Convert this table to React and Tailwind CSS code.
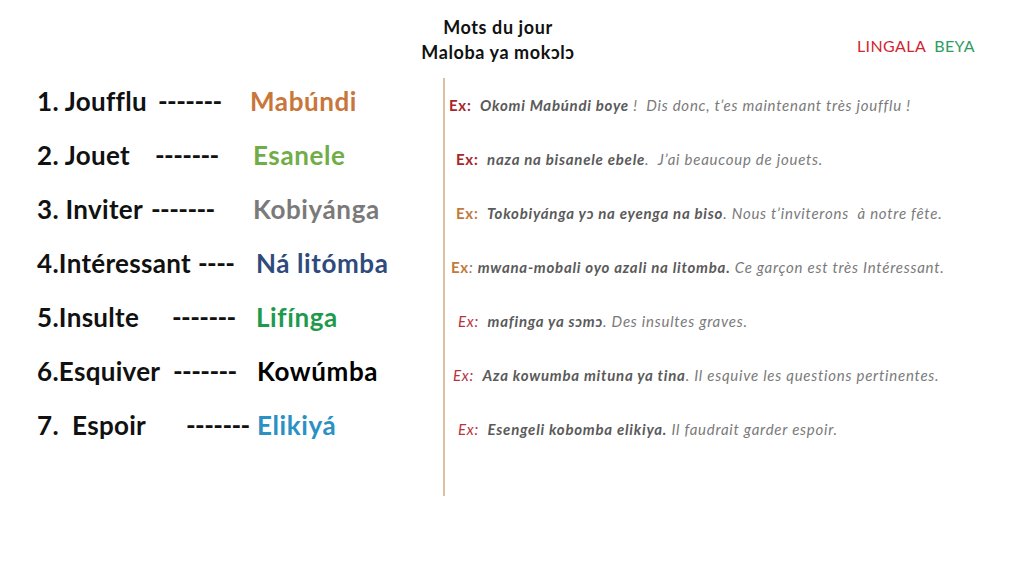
const words = [
  { fr: '1. Joufflu', w: 'w-[121px]', dash: '-------', dw: 'w-[92px]', ln: 'Mabúndi', color: 'text-[#c8763a]' },
  { fr: '2. Jouet', w: 'w-[118px]', dash: '-------', dw: 'w-[98px]', ln: 'Esanele', color: 'text-[#70ad47]' },
  { fr: '3. Inviter', w: 'w-[114px]', dash: '-------', dw: 'w-[102px]', ln: 'Kobiyánga', color: 'text-[#7a7a7a]' },
  { fr: '4.Intéressant', w: 'w-[161px]', dash: '----', dw: 'w-[58px]', ln: 'Ná litómba', color: 'text-[#2f4b7c]' },
  { fr: '5.Insulte', w: 'w-[135px]', dash: '-------', dw: 'w-[84px]', ln: 'Lifínga', color: 'text-[#1e9a4c]' },
  { fr: '6.Esquiver', w: 'w-[136px]', dash: '-------', dw: 'w-[84px]', ln: 'Kowúmba', color: 'text-black' },
  { fr: '7.  Espoir', w: 'w-[149px]', dash: '-------', dw: 'w-[71px]', ln: 'Elikiyá', color: 'text-[#2b90c2]' },
]

const examples = [
  { pad: 'pl-[4px]', ex: 'Ex:', exCls: 'not-italic font-bold text-[#a6262b]', ln: 'Okomi Mabúndi boye', sep: ' !  ', fr: 'Dis donc, t’es maintenant très joufflu !' },
  { pad: 'pl-[11px]', ex: 'Ex:', exCls: 'not-italic font-bold text-[#a6262b]', ln: 'naza na bisanele ebele', sep: '.  ', fr: 'J’ai beaucoup de jouets.' },
  { pad: 'pl-[11px]', ex: 'Ex:', exCls: 'not-italic font-bold text-[#c07a3c]', ln: 'Tokobiyánga yɔ na eyenga na biso', sep: '. ', fr: 'Nous t’inviterons  à notre fête.' },
  { pad: 'pl-[6px]', ex: 'Ex', exCls: 'not-italic font-bold text-[#c07a3c]', ln: 'mwana-mobali oyo azali na litomba.', sep: ': ', fr: 'Ce garçon est très Intéressant.', colonFirst: true },
  { pad: 'pl-[13px]', ex: 'Ex:', exCls: 'text-[#b8343c]', ln: 'mafinga ya sɔmɔ', sep: '. ', fr: 'Des insultes graves.' },
  { pad: 'pl-[8px]', ex: 'Ex:', exCls: 'text-[#b8343c]', ln: 'Aza kowumba mituna ya tina', sep: '. ', fr: 'Il esquive les questions pertinentes.' },
  { pad: 'pl-[13px]', ex: 'Ex:', exCls: 'text-[#b8343c]', ln: 'Esengeli kobomba elikiya.', sep: ' ', fr: 'Il faudrait garder espoir.' },
]

export default function App() {
  return (
    <div className="w-[1024px] h-[576px] bg-white overflow-hidden font-['Lato',sans-serif]">
      {/* header */}
      <div className="flex pt-[15px] h-[74px]">
        <div className="w-[396px]" />
        <div className="w-[204px] text-center text-[18px] leading-[25px] font-bold tracking-[0.6px] text-[#111]">
          <div>Mots du jour</div>
          <div>Maloba ya mokɔlɔ</div>
        </div>
        <div className="pl-[257px] pt-[22px] text-[16px] leading-[18px] tracking-[0.4px] whitespace-pre">
          <span className="text-[#d32431]">LINGALA</span>
          <span className="text-[#2e9d5f] ml-[8px]">BEYA</span>
        </div>
      </div>

      {/* body */}
      <div className="flex">
        <div className="w-[443px] shrink-0 pl-[37px]">
          {words.map((w) => (
            <div key={w.ln} className="h-[54px] flex items-center text-[26px] font-bold tracking-[0.3px] text-[#111] whitespace-pre">
              <span className={`shrink-0 ${w.w}`}>{w.fr}</span>
              <span className={`shrink-0 tracking-[-0.6px] ${w.dw}`}>{w.dash}</span>
              <span className={`tracking-[0.6px] ${w.color}`}>{w.ln}</span>
            </div>
          ))}
        </div>
        <div className="w-[2px] h-[418px] mt-[4px] bg-[#dcc0a6] shrink-0" />
        <div className="pt-[4px] flex-1">
          {examples.map((e) => (
            <div key={e.ln} className={`h-[54px] flex items-center italic text-[15px] tracking-[0.75px] text-[#7a7a7a] whitespace-pre ${e.pad}`}>
              <span className={e.exCls}>{e.ex}</span>
              {e.colonFirst ? <span>{e.sep}</span> : <span>  </span>}
              <span className="font-bold text-[#5a5a5a]">{e.ln}</span>
              {!e.colonFirst && <span>{e.sep}</span>}
              {e.colonFirst && <span> </span>}
              <span>{e.fr}</span>
            </div>
          ))}
        </div>
      </div>
    </div>
  )
}
